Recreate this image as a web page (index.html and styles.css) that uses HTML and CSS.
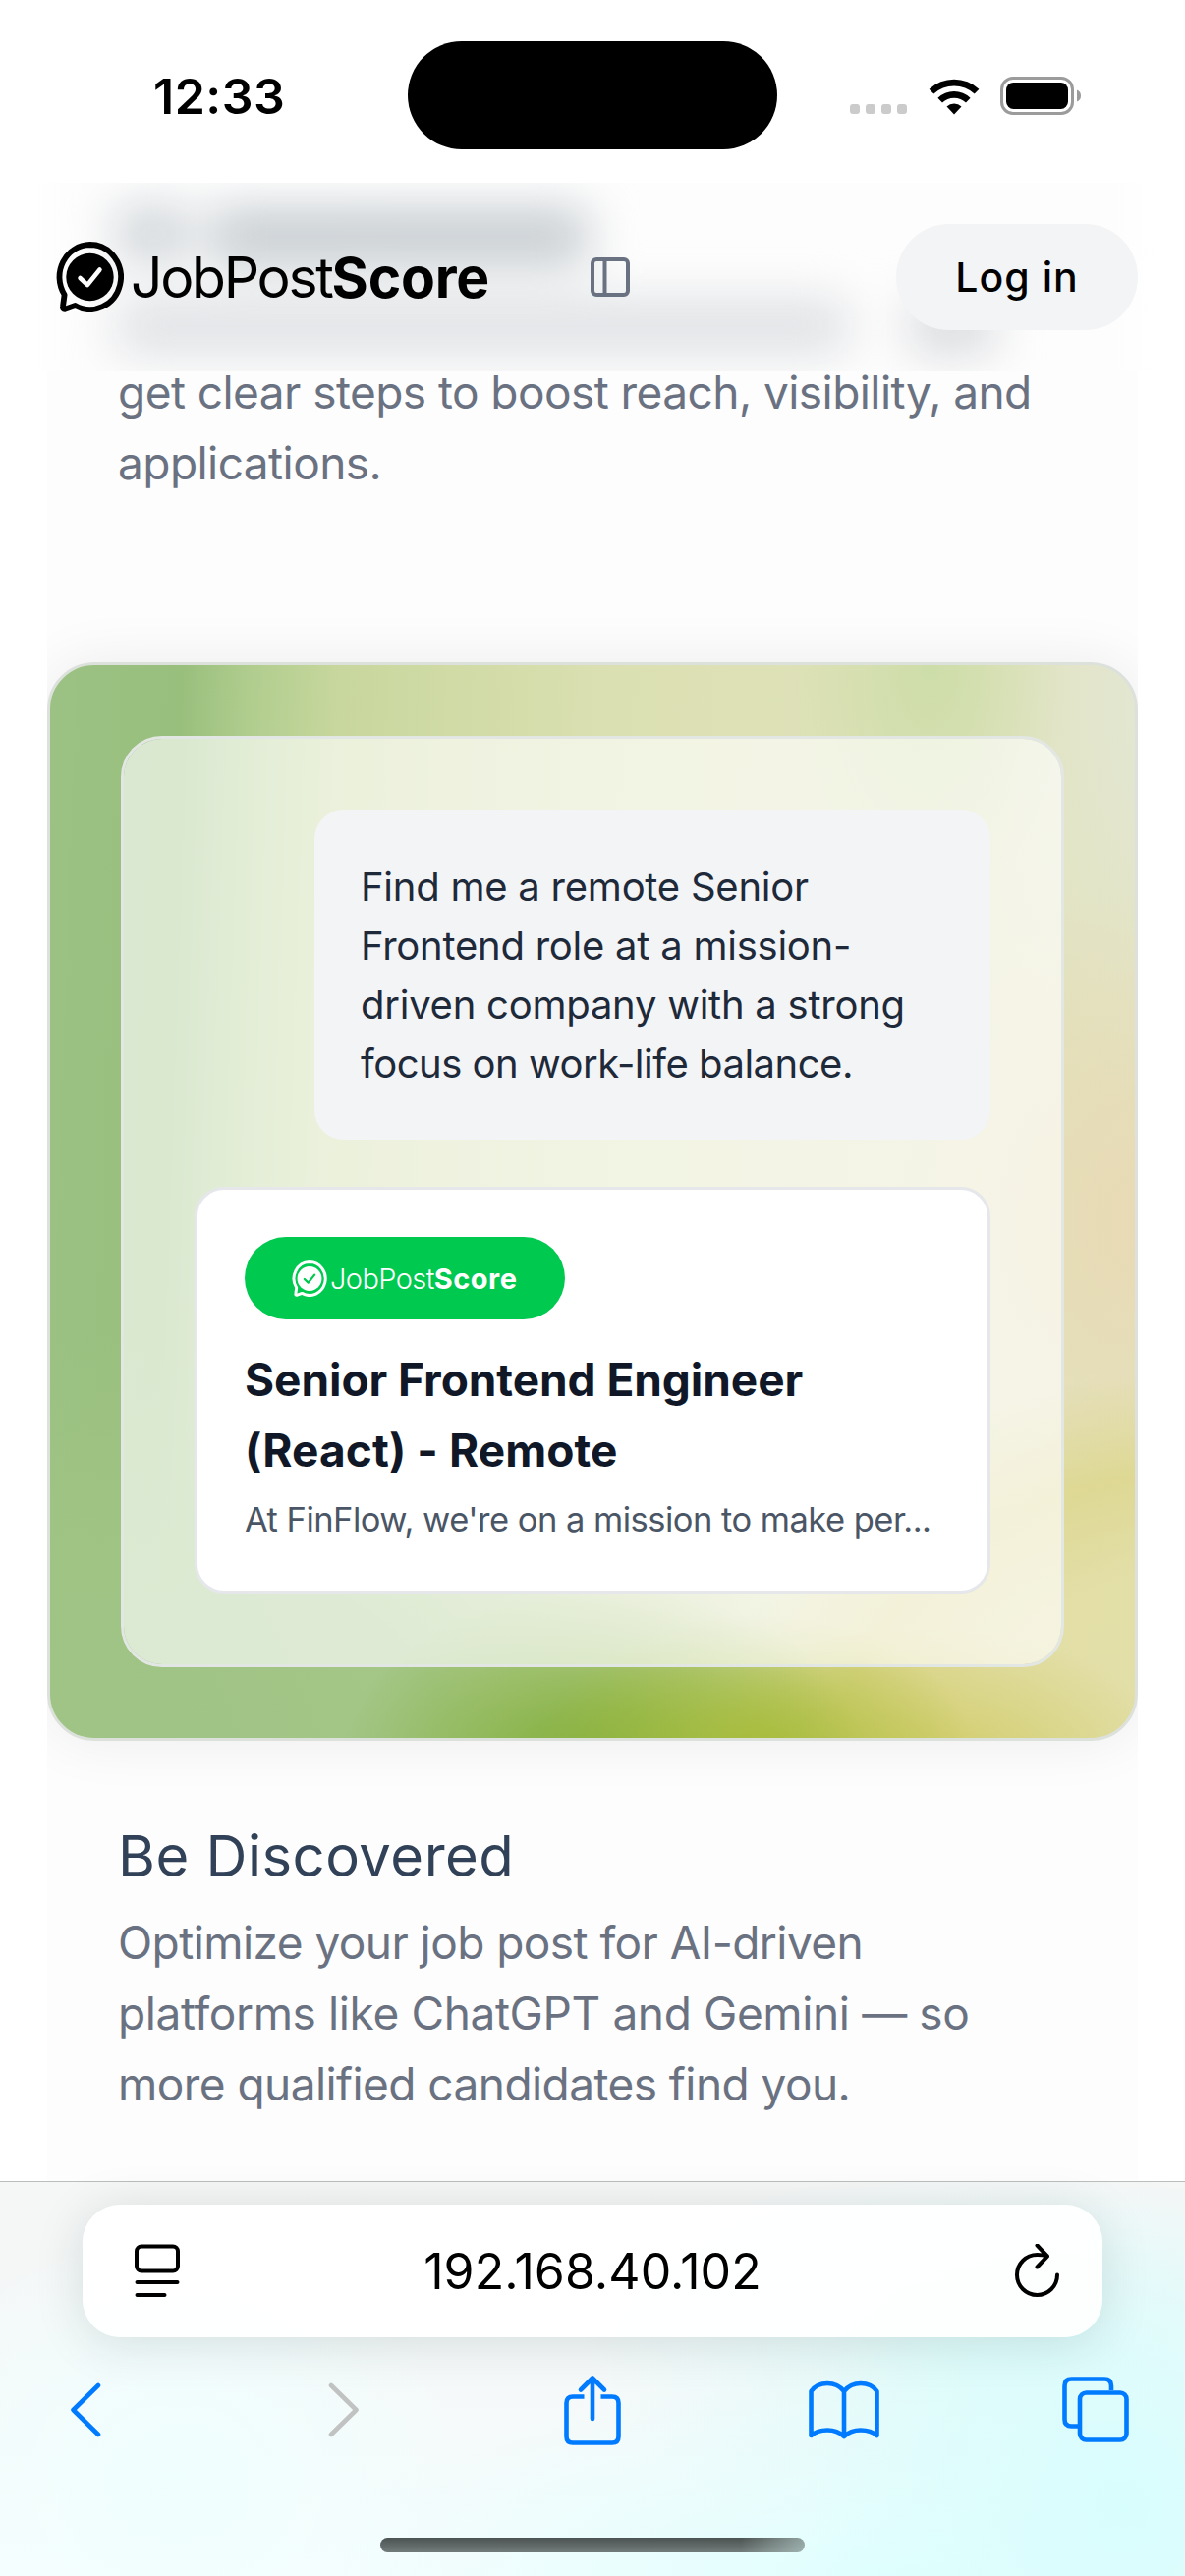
FILE: index.html
```html
<!DOCTYPE html>
<html lang="en">
<head>
<meta charset="utf-8">
<title>JobPostScore</title>
<link rel="stylesheet" href="styles.css">
</head>
<body>
<svg width="0" height="0" class="defs" aria-hidden="true">
  <defs>
    <symbol id="badge" viewBox="0 0 69 72">
      <path fill="none" stroke="currentColor" stroke-width="5.800" stroke-linejoin="round" d="M34.500 3a31.500 33 0 1 1-15 62L9 68.800q-2.500 0-2-2.800l1.600-12A31.500 33 0 0 1 34.500 3z"/>
      <circle cx="34.500" cy="36" r="24.200" fill="currentColor"/>
      <path class="badge-check" d="M24.500 37l7.500 7 12.500-15.500" fill="none" stroke-width="4.500" stroke-linecap="round" stroke-linejoin="round"/>
    </symbol>
  </defs>
</svg>

<div class="phone">
  <div class="status">
    <div class="time">12:33</div>
    <div class="island"></div>
    <div class="indicators">
      <div class="dots"><i></i><i></i><i></i><i></i></div>
      <svg class="wifi" width="52" height="38" viewBox="0 0 52 38">
        <path d="M26 37.500l-7.500-8a11 11 0 0 1 15 0z"/>
        <path d="M14 25.500l-4.600-4.800a24 24 0 0 1 33.200 0L38 25.500a17.500 17.500 0 0 0-24 0z"/>
        <path d="M5.300 16.500L.6 11.800a37 37 0 0 1 50.800 0l-4.700 4.700a30.500 30.500 0 0 0-41.400 0z"/>
      </svg>
      <svg class="battery" width="83" height="39" viewBox="0 0 83 39">
        <rect x="1.500" y="1.500" width="72" height="36" rx="11.500" fill="none" stroke="#9b9b9b" stroke-width="3"/>
        <rect x="6" y="6" width="63" height="27" rx="7.500" fill="#000"/>
        <path d="M78 13.500q4 1.500 4 6t-4 6z" fill="#9b9b9b"/>
      </svg>
    </div>
  </div>

  <header class="header">
    <div class="haze"><b class="h1"></b><b class="h2"></b><b class="h3"></b><b class="h4"></b><b class="h5"></b></div>
    <div class="brand">
      <svg class="badge" width="69" height="72"><use href="#badge"/></svg>
      <span class="wordmark"><span class="thin">JobPost</span><span class="bold">Score</span></span>
    </div>
    <svg class="panel-icon" width="40" height="40" viewBox="0 0 40 40" fill="none" stroke="#6a7282" stroke-width="4">
      <rect x="2" y="2" width="36" height="36" rx="4"/><path d="M14.500 2v36"/>
    </svg>
    <button class="login">Log in</button>
  </header>

  <main class="content">
    <p class="body intro">get clear steps to boost reach, visibility, and<br>applications.</p>

    <div class="stage">
      <section class="art">
        <div class="glass">
          <div class="bubble">Find me a remote Senior<br>Frontend role at a mission-<br>driven company with a strong<br><span class="tight">focus on work-life balance.</span></div>
          <article class="job">
            <div class="pill">
              <svg class="badge" width="36" height="37"><use href="#badge"/></svg>
              <span class="wordmark"><span class="thin">JobPost</span><span class="bold">Score</span></span>
            </div>
            <h3 class="job-title">Senior Frontend Engineer<br><span class="wide">(React) - Remote</span></h3>
            <p class="job-text">At FinFlow, we're on a mission to make per...</p>
          </article>
        </div>
      </section>
    </div>

    <h2 class="heading">Be Discovered</h2>
    <p class="body">Optimize your job post for AI-driven<br><span class="loose">platforms like ChatGPT and Gemini — so</span><br>more qualified candidates find you.</p>
  </main>

  <footer class="browser">
    <div class="address">
      <svg width="46" height="56" viewBox="0 0 46 56" fill="none" stroke="#000" stroke-width="4" stroke-linecap="round">
        <rect x="2" y="2.500" width="42" height="25" rx="5"/><path d="M2.500 39h41M2.500 52h28"/>
      </svg>
      <span class="url">192.168.40.102</span>
      <svg width="46" height="56" viewBox="0 0 46 56" fill="none" stroke="#000" stroke-width="4" stroke-linecap="round" stroke-linejoin="round">
        <path d="M43 31.500a20.500 20.500 0 1 1-20.500-20.500Q28 11 33 12.500M22.500 1.500L33 12.500 22.500 23.500"/>
      </svg>
    </div>
    <nav class="tools">
      <svg width="32" height="56" viewBox="0 0 32 56"><path d="M29 3L3.500 28 29 53"/></svg>
      <svg class="off" width="32" height="56" viewBox="0 0 32 56"><path d="M3 3l25.500 25L3 53"/></svg>
      <svg width="58" height="72" viewBox="0 0 58 72"><path d="M20.500 22.500H9Q2.500 22.500 2.500 29V63Q2.500 69.500 9 69.500H49Q55.500 69.500 55.500 63V29Q55.500 22.500 49 22.500H37.500" stroke-linecap="butt"/><path d="M29 45V4M17 15.500L29 3.500 41 15.500"/></svg>
      <svg width="72" height="60" viewBox="0 0 72 60"><path d="M36 11C32 6 26 3 19 3 12 3 6 6 2.500 11V56C7 52 12 50.500 19 50.500 26 50.500 32 53 36 57 40 53 46 50.500 53 50.500 60 50.500 65 52 69.500 56V11C66 6 60 3 53 3 46 3 40 6 36 11V57"/></svg>
      <svg width="68" height="68" viewBox="0 0 68 68"><rect x="18" y="16.500" width="47.500" height="48" rx="6.500"/><path d="M16 50.500H9.500Q2.500 50.500 2.500 43.500V9.500Q2.500 2.500 9.500 2.500H43Q50 2.500 50 9.500V14" stroke-linecap="butt"/></svg>
    </nav>
    <div class="home"></div>
  </footer>
</div>
</body>
</html>
```
FILE: styles.css
```css
* { box-sizing: border-box; margin: 0; padding: 0; }
body { background: #fff; font-family: Inter, "Liberation Sans", sans-serif; }
svg { display: block; flex: none; }
.defs { position: absolute; }
.phone { width: 1206px; height: 2622px; overflow: hidden; display: flex; flex-direction: column; }

.status { height: 186px; flex: none; display: grid; grid-template-columns: 415px 376px 415px; align-items: start; }
.time { padding: 67px 0 0 156px; font-size: 50px; line-height: 62px; font-weight: 600; letter-spacing: .5px; }
.island { margin-top: 42px; height: 110px; border-radius: 55px; background: #000; }
.indicators { display: flex; align-items: flex-end; padding: 78px 0 0 74px; height: 117px; }
.dots { display: flex; gap: 6px; padding-bottom: 1px; margin-right: 22px; }
.dots i { width: 10px; height: 10px; border-radius: 3px; background: #cbcbcb; }
.wifi { margin-right: 21px; }

.header { position: relative; height: 192px; flex: none; display: flex; align-items: center; padding: 0 48px 0 57px; overflow: hidden; background: linear-gradient(90deg, #fff 0, #fff 30px, #fdfdfd 70px, #fdfdfd 1130px, #fff 1180px); }
.haze { position: absolute; inset: 0; filter: blur(24px); }
.haze b { position: absolute; border-radius: 8px; background: #c6ccd0; }
.haze .h1 { left: 118px; top: 24px; width: 76px; height: 56px; background: #d0d5d9; }
.haze .h2 { left: 215px; top: 26px; width: 165px; height: 58px; }
.haze .h3 { left: 370px; top: 26px; width: 228px; height: 58px; }
.haze .h4 { left: 118px; top: 118px; width: 745px; height: 56px; background: #dfe1e4; }
.haze .h5 { left: 926px; top: 118px; width: 86px; height: 56px; background: #d8dadd; }
.brand { position: relative; display: flex; align-items: center; width: 544px; }
.badge { color: #000; --check: #fff; }
.badge-check { stroke: var(--check); }
.wordmark { display: flex; white-space: nowrap; }
.brand .wordmark { margin-left: 7px; padding-top: 2px; font-size: 57px; line-height: 72px; }
.thin { font-weight: 400; letter-spacing: -2.300px; }
.bold { font-weight: 700; letter-spacing: -.2px; }
.panel-icon { position: relative; }
.login { position: relative; margin-left: auto; width: 246px; height: 108px; border: 0; border-radius: 54px; background: #f3f4f6; font: 500 41px/108px Inter, sans-serif; letter-spacing: 1px; color: #000; }

.content { height: 1842px; flex: none; margin: 0 48px; background: #fdfdfd; }
.body { padding: 0 72px; font-size: 46px; line-height: 72px; color: #6a7282; white-space: nowrap; letter-spacing: -.560px; }
.loose { letter-spacing: -.380px; }
.intro { margin-top: -15px; }
.stage { margin-top: 97px; padding: 70px 0; overflow: hidden; }
.art { height: 1098px; padding: 72px; border: 3px solid #dde1dc; border-radius: 48px;
  box-shadow: 0 0 60px rgba(0,0,0,.07);
  background:
    radial-gradient(ellipse 220px 140px at 65% 101%, rgba(168,188,56,.95) 0, rgba(172,190,60,0) 100%),
    radial-gradient(ellipse 270px 190px at 51% 103%, #80ad3b 0, rgba(132,176,62,.8) 35%, rgba(140,180,80,0) 100%),
    radial-gradient(ellipse 260px 150px at 80% 103%, #cfca62 0, rgba(210,206,108,0) 100%),
    radial-gradient(ellipse 500px 400px at 106% 102%, rgba(226,222,166,.95) 0, rgba(226,222,164,.9) 50%, rgba(221,214,138,.8) 74%, rgba(221,214,138,0) 100%),
    radial-gradient(ellipse 260px 340px at 100% 52%, #e8dab4 0, rgba(232,218,180,0) 100%),
    radial-gradient(ellipse 140px 260px at 81% 0, rgba(200,220,164,.8) 0, rgba(200,220,164,0) 100%),
    radial-gradient(ellipse 200px 420px at 102% 4%, #e3e7d3 0, rgba(227,231,211,0) 100%),
    radial-gradient(ellipse 700px 420px at 8% 100%, #a0c486 0, rgba(160,196,132,.9) 45%, rgba(160,196,132,0) 100%),
    linear-gradient(92deg, #9bc284 0, #99bf7d 12%, #b0cd8e 18%, #c8d79d 26%, #dbe0b2 50%, #e3e3c0 100%);
  background-origin: border-box; }
.glass { height: 948px; padding: 72px; border: 3px solid #e3e7e4; border-radius: 42px; background: rgba(255,255,255,.64); background-clip: padding-box; }
.bubble { margin-left: 122px; width: 688px; height: 336px; padding: 49px 0 0 47px; border-radius: 30px; background: #f3f4f6; color: #1e2939; font-size: 40px; line-height: 60px; letter-spacing: -.240px; white-space: nowrap; }
.tight { letter-spacing: -.480px; }
.job { margin-top: 48px; height: 414px; padding: 48px; border: 3px solid #e5e7eb; border-radius: 30px; background: #fff; white-space: nowrap; }
.pill { width: 326px; height: 84px; padding-left: 48px; border-radius: 42px; background: #00c950; color: #fff; display: flex; align-items: center; }
.pill .badge { color: #fff; --check: #00c950; }
.pill .wordmark { margin-left: 3px; padding-top: 1px; font-size: 29px; line-height: 40px; }
.pill .thin { font-weight: 350; letter-spacing: -.6px; }
.pill .bold { letter-spacing: .5px; }
.job-title { margin-top: 24px; padding-top: 1px; height: 144px; font-size: 46px; line-height: 72px; font-weight: 700; letter-spacing: -.060px; color: #101828; }
.wide { letter-spacing: .1px; }
.job-text { margin-top: 12px; font-size: 34.500px; line-height: 48px; letter-spacing: -.520px; color: #4a5565; }
.heading { margin-top: 5px; padding-left: 72px; font-size: 58px; line-height: 84px; font-weight: 400; letter-spacing: .5px; color: #314158; }
.heading + .body { margin-top: 10px; }

.browser { height: 402px; flex: none; border-top: 1px solid #b9bdbc; padding: 23px 0 0;
  background:
    radial-gradient(ellipse 330px 330px at 95% 82%, #d8fdfd 0, rgba(214,254,254,0) 100%),
    radial-gradient(ellipse 420px 200px at 84% 45%, rgba(214,252,250,.7) 0, rgba(214,252,250,0) 100%),
    radial-gradient(ellipse 600px 200px at 75% 100%, rgba(218,255,255,.8) 0, rgba(218,255,255,0) 100%),
    radial-gradient(ellipse 300px 260px at 15% 75%, #effffe 0, rgba(240,255,255,0) 100%),
    linear-gradient(180deg, #f5f6f6 0, #f5f8f8 40%, #f7fdfd 100%); }
.address { margin: 0 84px; height: 135px; padding: 0 43px 0 53px; border-radius: 38px; background: rgba(255,255,255,.92); box-shadow: 0 6px 50px rgba(0,40,40,.13); display: flex; align-items: center; justify-content: space-between; }
.url { font-size: 50px; line-height: 60px; letter-spacing: .080px; margin-left: -10px; }
.tools { margin-top: 38px; height: 72px; padding-left: 71px; display: grid; grid-template-columns: 263px 240px 249px 258px 68px; align-items: center; }
.tools svg { fill: none; stroke: #007aff; stroke-width: 4.600; stroke-linecap: round; stroke-linejoin: round; }
.tools .off { stroke: #c1c3c2; }
.home { margin: 94px 0 0 387px; width: 432px; height: 15px; border-radius: 8px; background: linear-gradient(90deg, rgba(0,0,0,0) 85%, rgba(190,215,210,.6) 100%), linear-gradient(#4c5453, #727c7b); }
```
